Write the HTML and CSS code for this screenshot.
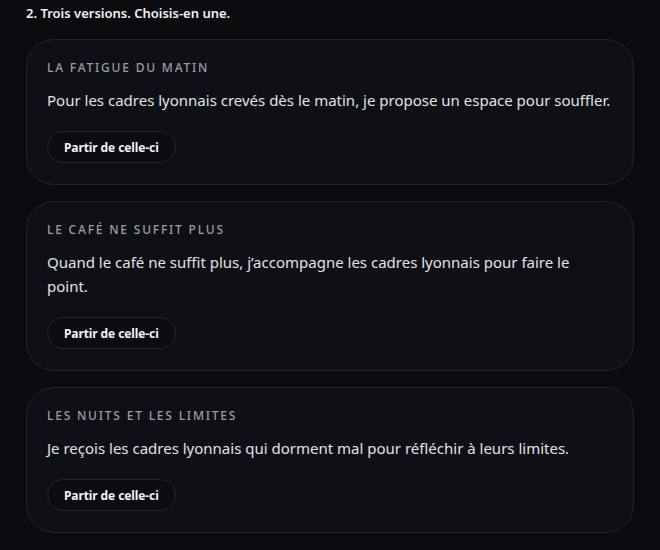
FILE: index.html
```html
<!DOCTYPE html>
<html lang="fr">
<head>
<meta charset="utf-8">
<link rel="stylesheet" href="styles.css">
</head>
<body>
<main class="page">
  <h2 class="title">2. Trois versions. Choisis-en une.</h2>
  <div class="list">
    <section class="card">
      <div class="label">La fatigue du matin</div>
      <p class="text">Pour les cadres lyonnais crevés dès le matin, je propose un espace pour souffler.</p>
      <div class="actions"><button class="btn">Partir de celle-ci</button></div>
    </section>
    <section class="card">
      <div class="label">Le café ne suffit plus</div>
      <p class="text">Quand le café ne suffit plus, j’accompagne les cadres lyonnais pour faire le point.</p>
      <div class="actions"><button class="btn">Partir de celle-ci</button></div>
    </section>
    <section class="card">
      <div class="label">Les nuits et les limites</div>
      <p class="text">Je reçois les cadres lyonnais qui dorment mal pour réfléchir à leurs limites.</p>
      <div class="actions"><button class="btn">Partir de celle-ci</button></div>
    </section>
  </div>
</main>
</body>
</html>
```
FILE: styles.css
```css
html, body {
  margin: 0;
  padding: 0;
  background: #0a0a0f;
}
body {
  font-family: "Noto Sans", "Open Sans", sans-serif;
  color: #e4e4e8;
}
.page {
  padding: 3px 26px 0 26px;
}
.title {
  margin: 0;
  font-size: 13px;
  font-weight: 600;
  line-height: 20px;
  color: #f2f2f5;
}
.list {
  display: flex;
  flex-direction: column;
  gap: 16px;
  margin-top: 16px;
}
.card {
  background: #0f1015;
  border: 1px solid #24252b;
  border-radius: 28px;
  padding: 20px 20px 21px 20px;
}
.label {
  font-size: 12px;
  line-height: 16px;
  letter-spacing: 1.8px;
  text-transform: uppercase;
  color: #9c9da4;
  font-weight: 500;
}
.text {
  margin: 12px 0 0 0;
  font-size: 15px;
  line-height: 24px;
  color: #e2e2e6;
}
.actions {
  display: flex;
  margin-top: 19px;
}
.btn {
  display: flex;
  align-items: center;
  height: 32px;
  padding: 0 16px;
  border-radius: 999px;
  border: 1px solid #25262c;
  background: #0b0b10;
  color: #f4f4f6;
  font-family: "Noto Sans", "Open Sans", sans-serif;
  font-size: 12px;
  font-weight: 700;
  letter-spacing: -0.1px;
}
```
